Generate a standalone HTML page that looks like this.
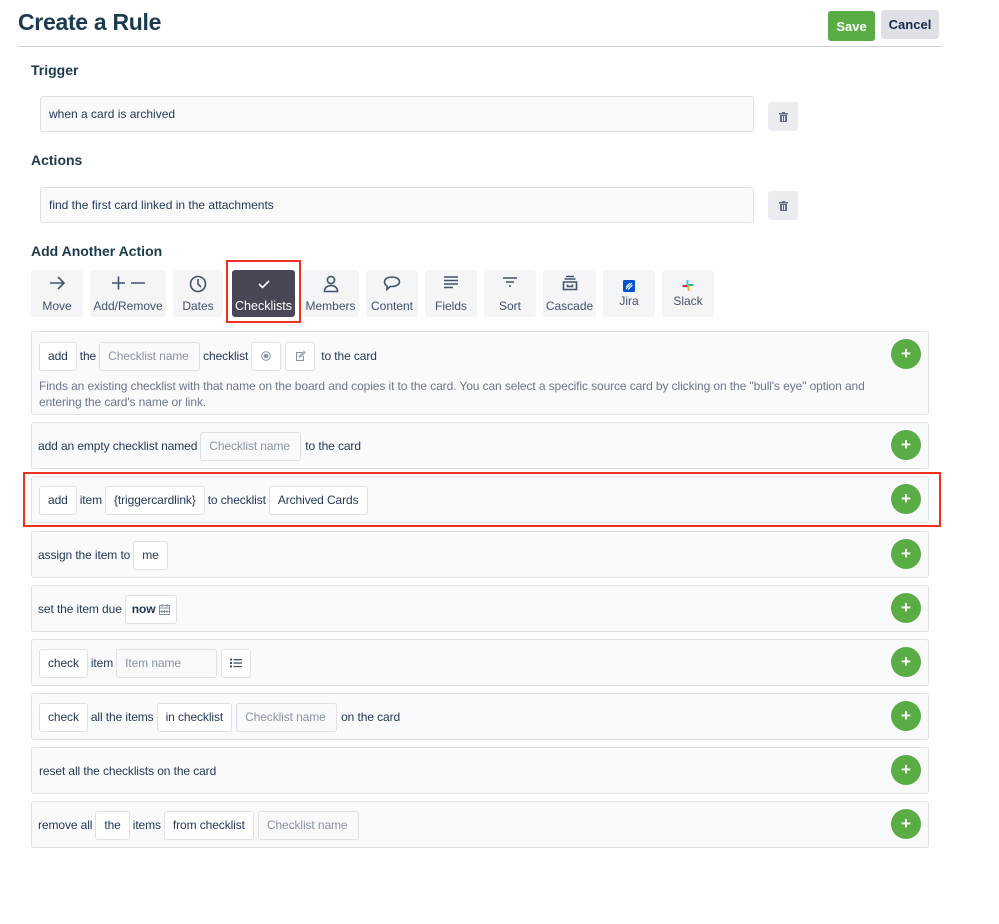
<!DOCTYPE html>
<html><head><meta charset="utf-8"><style>
*{box-sizing:border-box;margin:0;padding:0}
body{width:999px;height:924px;background:#fff;font-family:"Liberation Sans",sans-serif;color:#172b4d;position:relative;overflow:hidden}
.a{position:absolute}
h1{position:absolute;left:18px;top:9px;font-size:23px;font-weight:bold;color:#1b3a4e;letter-spacing:-0.3px}
.hr{position:absolute;left:18px;top:46px;width:924px;height:1px;background:#d0d4d9}
.btn{position:absolute;font-size:13px;font-weight:bold;display:flex;align-items:center;justify-content:center;border-radius:3px}
.lbl{position:absolute;left:31px;font-size:14px;font-weight:bold;color:#1b3a4e}
.inp{position:absolute;left:40px;width:714px;height:36px;background:#f9fafc;border:1px solid #dfe1e6;border-radius:3px;font-size:12px;padding-left:8px;display:flex;align-items:center;color:#253858}
.trash{position:absolute;left:768px;width:30px;height:29px;background:#ebecf0;border-radius:3px;display:flex;align-items:center;justify-content:center}
.tb{position:absolute;top:270px;height:47px;background:#f4f5f7;border-radius:3px;font-size:12px;color:#42526e;text-align:center}
.tb svg{position:absolute;left:50%;transform:translateX(-50%);top:5px}
.tb span{position:absolute;left:0;right:0;top:29px}
.row{position:absolute;left:31px;width:898px;background:#f9fafc;border:1px solid #dfe1e6;border-radius:3px;font-size:12px;color:#253858}
.ln{position:absolute;left:7px;display:flex;align-items:center;height:30px;white-space:nowrap;letter-spacing:-0.1px}
.c{height:29px;border:1px solid #dfe1e6;background:#fff;border-radius:3px;padding:0 8px;display:flex;align-items:center;margin-right:4px}
.ph{color:#8993a4;background:#f9fafc;padding:0 8px}
.t{margin-right:3px;margin-left:-1px}
.plus{position:absolute;right:7px;width:30px;height:30px;border-radius:50%;background:#5aac44;color:#fff;font-weight:bold;font-size:17px;display:flex;align-items:center;justify-content:center}
.red{position:absolute;border:2px solid #f0311f}
</style></head><body>
<h1>Create a Rule</h1>
<div class="btn" style="left:828px;top:11px;width:47px;height:30px;background:#5aac44;color:#fff">Save</div>
<div class="btn" style="left:881px;top:10px;width:58px;height:29px;background:#dfe1e6;color:#172b4d">Cancel</div>
<div class="hr"></div>

<div class="lbl" style="top:62px">Trigger</div>
<div class="inp" style="top:96px">when a card is archived</div>
<div class="trash" style="top:102px"><svg width="9" height="10" viewBox="0 0 9 10"><rect x="0" y="1" width="9" height="1.5" fill="#5e6c84"/><rect x="3" y="0" width="3" height="1.5" fill="#5e6c84"/><rect x="1" y="3" width="7" height="7" fill="#5e6c84"/><rect x="3" y="4" width="1" height="5" fill="#ebecf0"/><rect x="5" y="4" width="1" height="5" fill="#ebecf0"/></svg></div>

<div class="lbl" style="top:152px">Actions</div>
<div class="inp" style="top:187px">find the first card linked in the attachments</div>
<div class="trash" style="top:191px"><svg width="9" height="10" viewBox="0 0 9 10"><rect x="0" y="1" width="9" height="1.5" fill="#5e6c84"/><rect x="3" y="0" width="3" height="1.5" fill="#5e6c84"/><rect x="1" y="3" width="7" height="7" fill="#5e6c84"/><rect x="3" y="4" width="1" height="5" fill="#ebecf0"/><rect x="5" y="4" width="1" height="5" fill="#ebecf0"/></svg></div>

<div class="lbl" style="top:243px">Add Another Action</div>

<div class="tb" style="left:31px;width:52px"><svg width="18" height="16" viewBox="0 0 18 16" fill="none" stroke="#42526e" stroke-width="1.6"><path d="M2 8h14M10 2l6 6-6 6"/></svg><span>Move</span></div>
<div class="tb" style="left:90px;width:76px"><svg width="36" height="16" viewBox="0 0 36 16" fill="none" stroke="#42526e" stroke-width="1.6"><path d="M2 8h13M8.5 1.5v13M21 8h14"/></svg><span>Add/Remove</span></div>
<div class="tb" style="left:173px;width:50px"><svg width="18" height="18" viewBox="0 0 18 18" fill="none" stroke="#42526e" stroke-width="1.6"><circle cx="9" cy="9" r="7.5"/><path d="M9 4v5l3 3"/></svg><span>Dates</span></div>
<div class="tb" style="left:232px;width:63px;background:#4a4655;color:#fff;font-size:12.5px"><svg width="14" height="12" viewBox="0 0 14 12" fill="none" stroke="#fff" stroke-width="1.6" style="top:8px"><path d="M2 6l3.5 3.5L12 3"/></svg><span>Checklists</span></div>
<div class="red" style="left:226px;top:260px;width:75px;height:63px"></div>
<div class="tb" style="left:302px;width:57px"><svg width="16" height="18" viewBox="0 0 16 18" fill="none" stroke="#42526e" stroke-width="1.6"><circle cx="8" cy="5" r="3.6"/><path d="M1.5 16.5c0-4 3-6 6.5-6s6.5 2 6.5 6z"/></svg><span>Members</span></div>
<div class="tb" style="left:366px;width:52px"><svg width="18" height="16" viewBox="0 0 18 16" fill="none" stroke="#42526e" stroke-width="1.6"><path d="M9 2c4 0 7.5 2 7.5 4.8S13 11.5 9 11.5H7l-3 3v-3.5C2 10 1.5 8.5 1.5 6.8 1.5 4 5 2 9 2z"/></svg><span>Content</span></div>
<div class="tb" style="left:425px;width:52px"><svg width="16" height="14" viewBox="0 0 16 14" fill="none" stroke="#42526e" stroke-width="1.6"><path d="M1 2h14M1 5.5h14M1 9h14M1 12.5h9"/></svg><span>Fields</span></div>
<div class="tb" style="left:484px;width:52px"><svg width="16" height="14" viewBox="0 0 16 14" fill="none" stroke="#42526e" stroke-width="1.6"><path d="M1 3h14M4 7h8M7 11h2"/></svg><span>Sort</span></div>
<div class="tb" style="left:543px;width:53px"><svg width="16" height="16" viewBox="0 0 16 16" fill="none" stroke="#42526e" stroke-width="1.6"><path d="M4 1.5h8M2.5 4h11M1.5 7h13v7.5h-13zM5.5 9.5v2h5v-2"/></svg><span>Cascade</span></div>
<div class="tb" style="left:603px;width:52px"><svg width="12" height="12" viewBox="0 0 12 12" style="top:10px"><rect width="12" height="12" rx="1.5" fill="#0052cc"/><path d="M3 9l6-6M5 9.5l4.5-4.5M3 7l4-4" stroke="#fff" stroke-width="1.1"/></svg><span style="top:24px">Jira</span></div>
<div class="tb" style="left:662px;width:52px"><svg width="11" height="11" viewBox="0 0 11 11" style="top:10px"><rect x="4" y="0" width="2" height="5" fill="#36c5f0"/><rect x="6" y="4" width="5" height="2" fill="#2eb67d"/><rect x="5" y="6" width="2" height="5" fill="#ecb22e"/><rect x="0" y="5" width="5" height="2" fill="#e01e5a"/></svg><span style="top:24px">Slack</span></div>

<!-- row1 -->
<div class="row" style="top:331px;height:84px">
 <div class="ln" style="top:9px"><div class="c">add</div><span class="t">the</span><div class="c ph" style="width:101px">Checklist name</div><span class="t">checklist</span><div class="c" style="width:30px;padding:0;justify-content:center"><svg width="10" height="10"><circle cx="5" cy="5" r="4.3" fill="none" stroke="#8993a4"/><circle cx="5" cy="5" r="2.3" fill="#8993a4"/></svg></div><div class="c" style="width:30px;padding:0;justify-content:center;margin-right:6px"><svg width="11" height="10" viewBox="0 0 11 10" fill="none" stroke="#8993a4"><path d="M7 1.5H1.5v8h7V5"/><path d="M4.5 6l.3-1.5L9 .5l1 1L6 5.7z"/></svg></div><span>to the card</span></div>
 <div class="a" style="left:7px;top:46px;width:880px;color:#6b778c;line-height:16px;font-size:12px;letter-spacing:-0.1px">Finds an existing checklist with that name on the board and copies it to the card. You can select a specific source card by clicking on the "bull's eye" option and<br>entering the card's name or link.</div>
 <div class="plus" style="top:7px">+</div>
</div>
<div class="row" style="top:422px;height:47px"><div class="ln" style="top:8px"><span class="t">add an empty checklist named</span><div class="c ph" style="width:101px">Checklist name</div><span>to the card</span></div><div class="plus" style="top:7px">+</div></div>
<div class="row" style="top:476px;height:47px"><div class="ln" style="top:8px"><div class="c">add</div><span class="t">item</span><div class="c">{triggercardlink}</div><span class="t">to checklist</span><div class="c">Archived Cards</div></div><div class="plus" style="top:7px">+</div></div>
<div class="red" style="left:23px;top:472px;width:918px;height:55px"></div>
<div class="row" style="top:531px;height:47px"><div class="ln" style="top:8px"><span class="t">assign the item to</span><div class="c">me</div></div><div class="plus" style="top:7px">+</div></div>
<div class="row" style="top:585px;height:47px"><div class="ln" style="top:8px"><span class="t">set the item due</span><div class="c" style="font-weight:bold;padding:0 6px">now&nbsp;<svg width="11" height="11" viewBox="0 0 11 11" fill="none" stroke="#8993a4"><rect x=".5" y="1.5" width="10" height="9"/><path d="M.5 4h10M3 0v3M8 0v3M3 6v3M5.5 6v3M8 6v3M1 7.5h9"/></svg></div></div><div class="plus" style="top:7px">+</div></div>
<div class="row" style="top:639px;height:47px"><div class="ln" style="top:8px"><div class="c">check</div><span class="t">item</span><div class="c ph" style="width:101px">Item name</div><div class="c" style="width:30px;padding:0;justify-content:center"><svg width="12" height="10" viewBox="0 0 12 10" fill="#42526e"><rect x="0" y="0.5" width="2" height="2"/><rect x="0" y="4" width="2" height="2"/><rect x="0" y="7.5" width="2" height="2"/><rect x="3.5" y="1" width="8.5" height="1.3"/><rect x="3.5" y="4.4" width="8.5" height="1.3"/><rect x="3.5" y="7.9" width="8.5" height="1.3"/></svg></div></div><div class="plus" style="top:7px">+</div></div>
<div class="row" style="top:693px;height:47px"><div class="ln" style="top:8px"><div class="c">check</div><span class="t">all the items</span><div class="c">in checklist</div><div class="c ph" style="width:101px">Checklist name</div><span>on the card</span></div><div class="plus" style="top:7px">+</div></div>
<div class="row" style="top:747px;height:47px"><div class="ln" style="top:8px"><span>reset all the checklists on the card</span></div><div class="plus" style="top:7px">+</div></div>
<div class="row" style="top:801px;height:47px"><div class="ln" style="top:8px"><span class="t">remove all</span><div class="c">the</div><span class="t">items</span><div class="c">from checklist</div><div class="c ph" style="width:101px">Checklist name</div></div><div class="plus" style="top:7px">+</div></div>
</body></html>
